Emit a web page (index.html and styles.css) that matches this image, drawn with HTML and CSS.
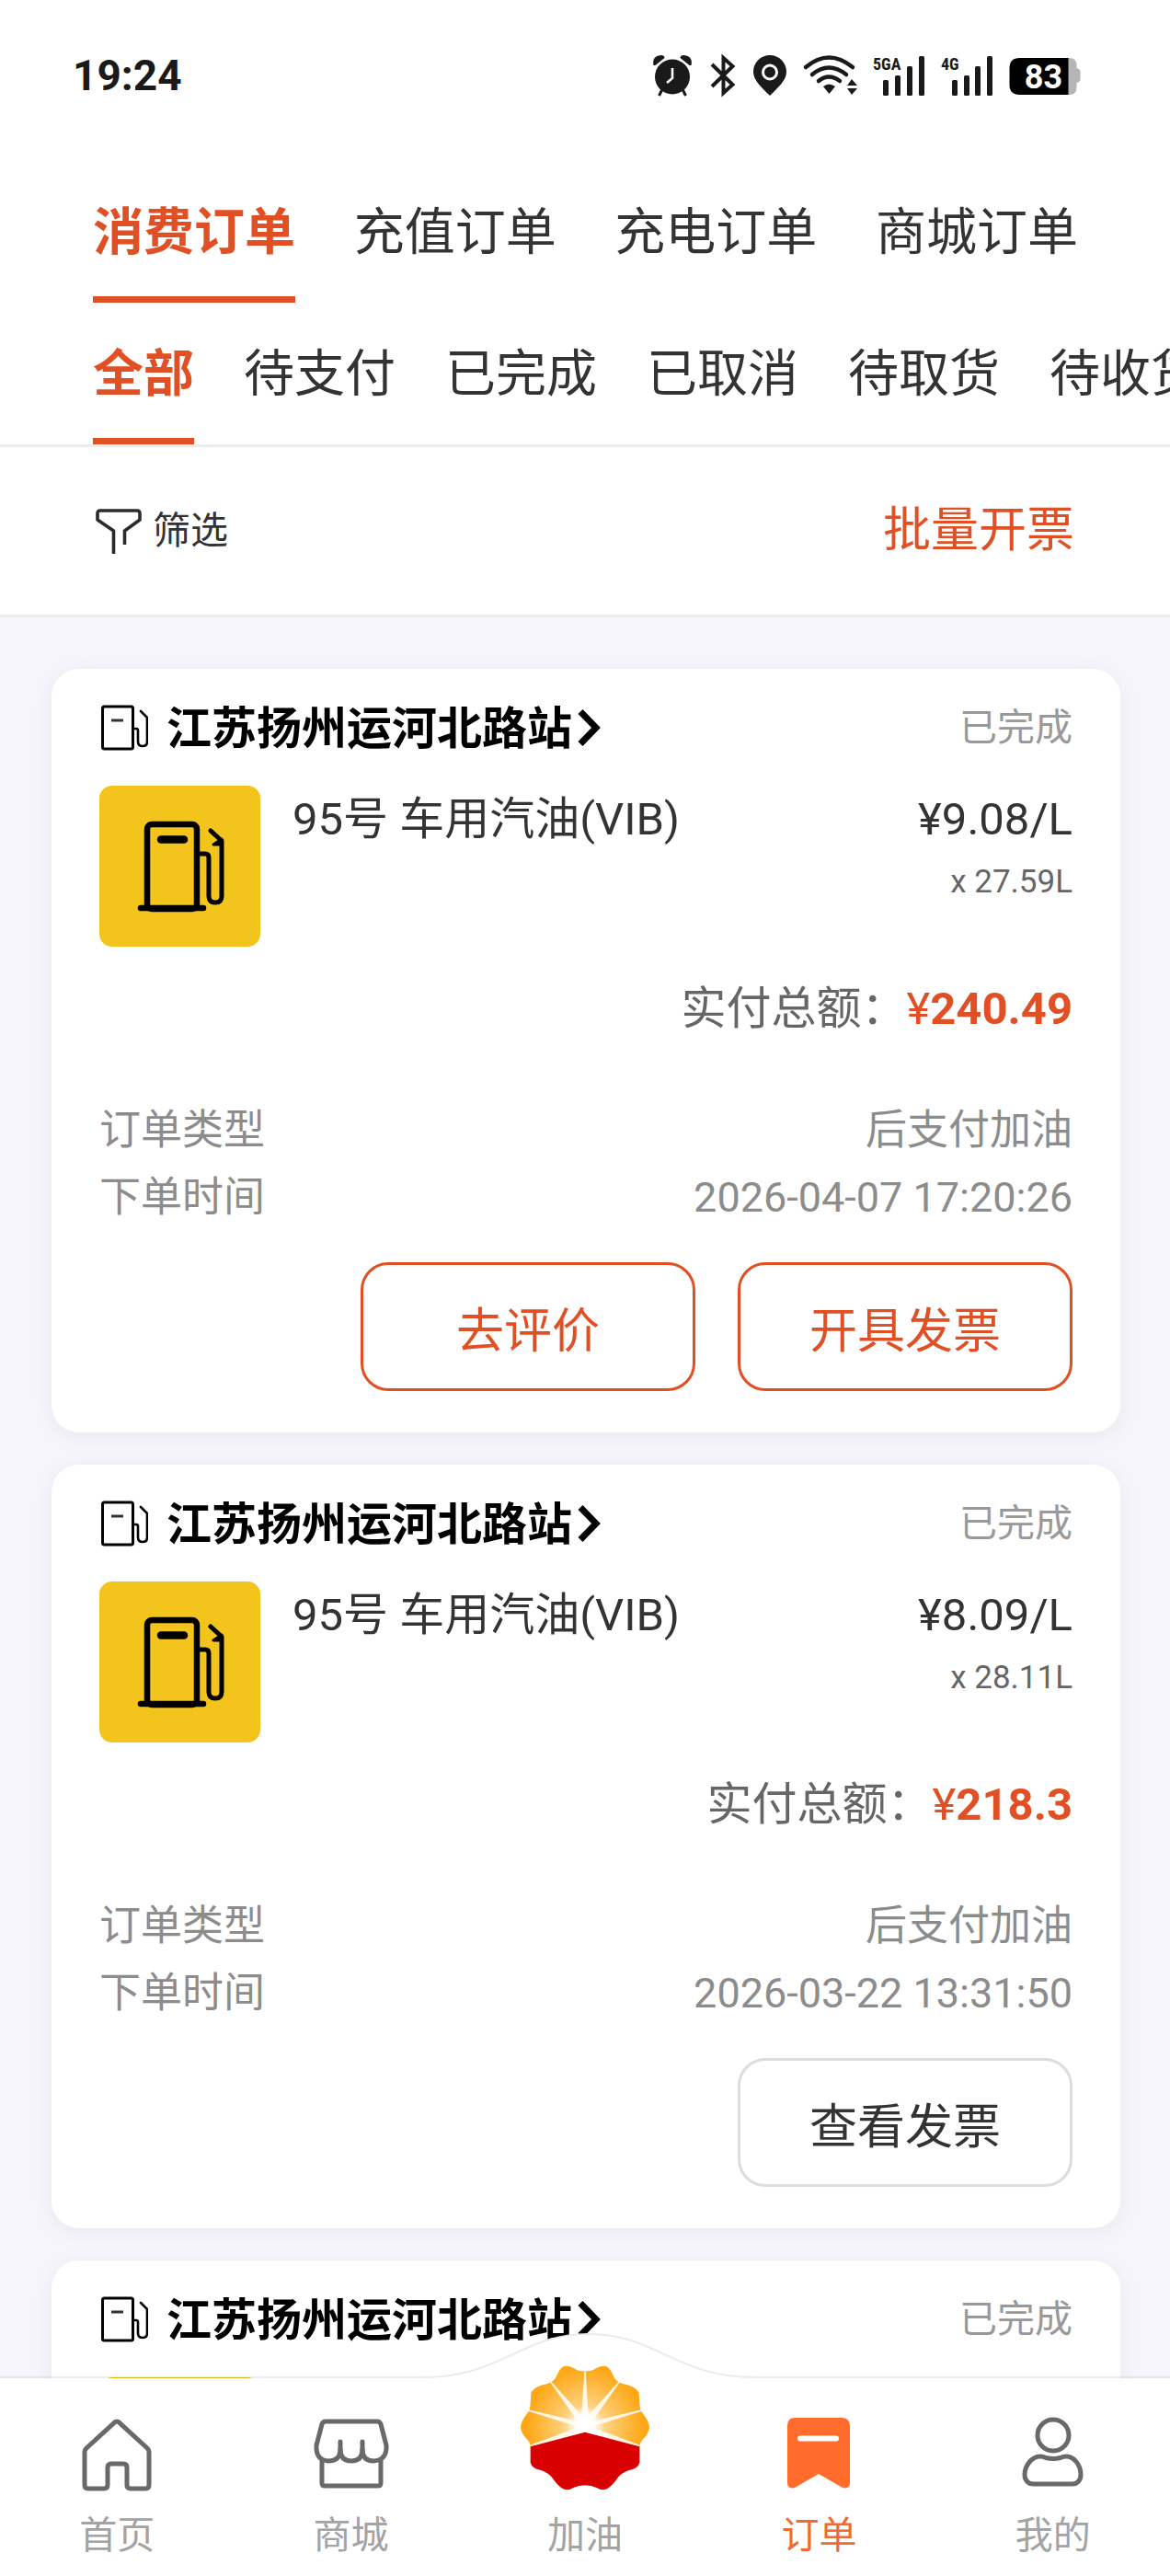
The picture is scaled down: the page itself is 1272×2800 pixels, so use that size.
FILE: index.html
```html
<!DOCTYPE html>
<html lang="zh-CN">
<head>
<meta charset="utf-8">
<meta name="viewport" content="width=device-width, initial-scale=1">
<title>订单</title>
<link rel="stylesheet" href="styles.css">
</head>
<body>
<svg class="sprite" aria-hidden="true">
  <symbol id="pump-small" viewBox="0 0 51 50">
    <g fill="none" stroke="#000" stroke-linejoin="round" stroke-linecap="round">
      <rect x="1.5" y="2" width="33" height="46" rx="2" stroke-width="3"/>
      <path d="M11 17h13" stroke="#333" stroke-width="3" stroke-linecap="butt"/>
      <path d="M35 26h3q2 0 2 2v12q0 5 5 5t5-5V14l-7-7" stroke-width="2.6"/>
    </g>
  </symbol>
  <symbol id="pump-large" viewBox="0 0 175 175">
    <g fill="none" stroke="#000" stroke-linejoin="round" stroke-linecap="round">
      <rect x="52" y="42" width="54" height="92" rx="5" stroke-width="6.5"/>
      <path d="M45 133h68" stroke-width="6.5"/>
      <path d="M67 58.500h25" stroke-width="8.500"/>
      <path d="M109 74h6q4 0 4 4v42q0 7 7 7t7-7V60l-12-11" stroke-width="5"/>
      <path d="M133 58l-9 6h9z" fill="#000" stroke-width="3"/>
    </g>
  </symbol>
  <symbol id="chevron" viewBox="0 0 26 42">
    <path d="M3 3.500L20 21 3 38.500" fill="none" stroke="#000" stroke-width="7"/>
  </symbol>
</svg>

<div class="app">
  <header class="top">
    <div class="status-bar">
      <time class="clock">19:24</time>
      <div class="status-icons">
        <svg width="46" height="44" viewBox="0 0 43 44" fill="#1a1a1a" aria-label="闹钟">
          <path d="M1 11Q-1 1 9 0q4 0 4 3L3 11zM42 11Q44 1 34 0q-4 0-4 3l10 8z"/>
          <path d="M10 38l-3 6M33 38l3 6" stroke="#1a1a1a" stroke-width="3"/>
          <circle cx="21.500" cy="23.500" r="19"/>
          <path d="M21.500 14v11l-6 5" fill="none" stroke="#fff" stroke-width="2.600"/>
        </svg>
        <svg width="30" height="44" viewBox="0 0 27 44" aria-label="蓝牙">
          <path d="M1.500 10L24 32 14 41V3l10 9L1.500 34" fill="none" stroke="#1a1a1a" stroke-width="4"/>
        </svg>
        <svg width="38" height="44" viewBox="0 0 36 44" aria-label="定位">
          <path d="M18 0C8 0 0 8 0 18c0 9 8 16 18 26 10-10 18-17 18-26C36 8 28 0 18 0z" fill="#1a1a1a"/>
          <circle cx="18" cy="18.500" r="7.500" fill="none" stroke="#fff" stroke-width="3"/>
        </svg>
        <svg width="59" height="44" viewBox="0 0 59 44" aria-label="无线网络">
          <g fill="none" stroke="#1a1a1a" stroke-width="4.500" stroke-linecap="round">
            <path d="M3 13Q28 -8 54 13M10 21Q28 6 47 21M17 28Q28 19 40 28"/>
          </g>
          <path d="M22 34q6-5 13 0l-6.500 8zM53 26l6 7H48zM48 36h11l-6 7z" fill="#1a1a1a"/>
        </svg>
        <svg width="57" height="44" viewBox="0 0 57 44" fill="#1a1a1a" aria-label="5GA 信号">
          <text class="net" x="0" y="16">5GA</text>
          <rect x="11" y="27" width="6" height="17" rx="1.500"/><rect x="24" y="22" width="6" height="22" rx="1.500"/>
          <rect x="37" y="12" width="6" height="32" rx="1.500"/><rect x="50" y="1" width="6" height="43" rx="1.500"/>
        </svg>
        <svg width="57" height="44" viewBox="0 0 57 44" fill="#1a1a1a" aria-label="4G 信号">
          <text class="net" x="0" y="16">4G</text>
          <rect x="12" y="27" width="6" height="17" rx="1.500"/><rect x="25" y="22" width="6" height="22" rx="1.500"/>
          <rect x="37" y="12" width="6" height="32" rx="1.500"/><rect x="50" y="1" width="6" height="43" rx="1.500"/>
        </svg>
        <svg width="78" height="44" viewBox="0 0 77 44" aria-label="电量 83%">
          <path d="M62 3h3q8 0 8 8v3q4 1 4 4v8q0 3-4 4v5q0 8-8 8h-3z" fill="#b5b5b5"/>
          <path d="M64 3H11Q0 3 0 14v18q0 11 11 11h53z" fill="#000"/>
          <text class="battery" x="37" y="36" text-anchor="middle">83</text>
        </svg>
      </div>
    </div>
    <nav class="tabs tabs-type" aria-label="订单种类">
      <button class="tab active">消费订单</button>
      <button class="tab">充值订单</button>
      <button class="tab">充电订单</button>
      <button class="tab">商城订单</button>
    </nav>
    <nav class="tabs tabs-state" aria-label="订单状态">
      <button class="tab active">全部</button>
      <button class="tab">待支付</button>
      <button class="tab">已完成</button>
      <button class="tab">已取消</button>
      <button class="tab">待取货</button>
      <button class="tab">待收货</button>
    </nav>
    <div class="toolbar">
      <button class="filter">
        <svg width="50" height="50" viewBox="0 0 50 50" aria-hidden="true">
          <path d="M19.500 49V24L2 12V5q0-3 3-3h40q3 0 3 3v7L31.500 24v15" fill="none" stroke="#2b2b2b" stroke-width="3.600" stroke-linejoin="round"/>
        </svg>
        筛选
      </button>
      <button class="batch">批量开票</button>
    </div>
  </header>

  <main class="orders">
    <article class="card">
      <div class="card-head">
        <a class="station" href="#station">
          <svg width="51" height="50" aria-hidden="true"><use href="#pump-small"/></svg>
          <span>江苏扬州运河北路站</span>
          <svg class="chevron" width="26" height="42" aria-hidden="true"><use href="#chevron"/></svg>
        </a>
        <span class="state">已完成</span>
      </div>
      <div class="product">
        <div class="thumb"><svg width="175" height="175" aria-hidden="true"><use href="#pump-large"/></svg></div>
        <h2 class="name">95号 车用汽油(VIB)</h2>
        <div class="price"><div class="unit">¥9.08/L</div><div class="amount">x 27.59L</div></div>
      </div>
      <p class="total">实付总额：<span class="money">¥<b>240.49</b></span></p>
      <dl class="details">
        <div class="detail"><dt>订单类型</dt><dd>后支付加油</dd></div>
        <div class="detail"><dt>下单时间</dt><dd>2026-04-07 17:20:26</dd></div>
      </dl>
      <div class="actions">
        <button class="action primary">去评价</button>
        <button class="action primary">开具发票</button>
      </div>
    </article>

    <article class="card">
      <div class="card-head">
        <a class="station" href="#station">
          <svg width="51" height="50" aria-hidden="true"><use href="#pump-small"/></svg>
          <span>江苏扬州运河北路站</span>
          <svg class="chevron" width="26" height="42" aria-hidden="true"><use href="#chevron"/></svg>
        </a>
        <span class="state">已完成</span>
      </div>
      <div class="product">
        <div class="thumb"><svg width="175" height="175" aria-hidden="true"><use href="#pump-large"/></svg></div>
        <h2 class="name">95号 车用汽油(VIB)</h2>
        <div class="price"><div class="unit">¥8.09/L</div><div class="amount">x 28.11L</div></div>
      </div>
      <p class="total">实付总额：<span class="money">¥<b>218.3</b></span></p>
      <dl class="details">
        <div class="detail"><dt>订单类型</dt><dd>后支付加油</dd></div>
        <div class="detail"><dt>下单时间</dt><dd>2026-03-22 13:31:50</dd></div>
      </dl>
      <div class="actions">
        <button class="action">查看发票</button>
      </div>
    </article>

    <article class="card">
      <div class="card-head">
        <a class="station" href="#station">
          <svg width="51" height="50" aria-hidden="true"><use href="#pump-small"/></svg>
          <span>江苏扬州运河北路站</span>
          <svg class="chevron" width="26" height="42" aria-hidden="true"><use href="#chevron"/></svg>
        </a>
        <span class="state">已完成</span>
      </div>
      <div class="product">
        <div class="thumb"><svg width="175" height="175" aria-hidden="true"><use href="#pump-large"/></svg></div>
      </div>
    </article>
  </main>

  <nav class="bottom-nav" aria-label="主导航">
    <svg class="bump" width="400" height="52" viewBox="0 0 400 52" aria-hidden="true">
      <path d="M24 49C110 49 130 2 204 2S298 49 384 49V52H24z" fill="#fff"/>
      <path d="M24 49C110 49 130 2 204 2S298 49 384 49" fill="none" stroke="#ebebed" stroke-width="2"/>
    </svg>
    <a class="nav-item" href="#home">
      <svg width="80" height="80" viewBox="0 0 80 80" aria-hidden="true">
        <path d="M40 4q2 0 3 1.500L73 33q2 2 2 4v36q0 4-4 4H55q-4 0-4-4V54q0-4-4-4H34q-4 0-4 4v19q0 4-4 4H9q-4 0-4-4V37q0-2 2-4L37 5.500Q38 4 40 4z" fill="none" stroke="#696969" stroke-width="5"/>
      </svg>
      <span>首页</span>
    </a>
    <a class="nav-item" href="#mall">
      <svg width="84" height="80" viewBox="0 0 84 80" aria-hidden="true">
        <g fill="none" stroke="#696969" stroke-width="5" stroke-linejoin="round" stroke-linecap="round">
          <path d="M10 46v25q0 3 3 3h58q3 0 3-3V46"/>
          <path d="M14 4h56q3 0 4 3l6 23q1 16-14 17-12 0-12-13 0 13-12 13T30 34q0 13-13 13Q3 46 4 30L10 7q1-3 4-3z"/>
          <path d="M30 26v9M54 26v9"/>
        </g>
      </svg>
      <span>商城</span>
    </a>
    <a class="nav-item" href="#fuel">
      <svg width="142" height="137" viewBox="315 263 426 411" aria-hidden="true">
        <defs>
          <radialGradient id="petal" gradientUnits="userSpaceOnUse" cx="528" cy="462" r="215">
            <stop offset="0.100" stop-color="#ffe9c0"/><stop offset="0.400" stop-color="#fdcb6e"/><stop offset="0.900" stop-color="#fda714"/>
          </radialGradient>
          <radialGradient id="glow" gradientUnits="userSpaceOnUse" cx="528" cy="458" r="62">
            <stop offset="0.350" stop-color="#fff"/><stop offset="1" stop-color="#fff" stop-opacity="0"/>
          </radialGradient>
          <g id="logo-half">
            <path d="M528 282Q505 283 490 271 470 262 455 268 445 275 437 294 430 313 415 319 400 325 385 328 357 337 352 354L350 390Q349 403 345 412 318 445 318 466 321 487 338 503 350 516 350 527L528 482z" fill="url(#petal)"/>
            <path d="M350 527V580Q355 600 385 605 413 615 425 635 440 656 455 665 472 674 490 662 508 654 529 654V480z" fill="#d80000"/>
            <path d="M526 282h3v190h-15zM414 317l3-2L538 450l-18 18zM344 413l2-5 181 43-9 16zM350 528l2-6 166-62 10 21z" fill="#fff" fill-opacity="0.850"/>
          </g>
        </defs>
        <use href="#logo-half"/>
        <use href="#logo-half" transform="translate(1056 0) scale(-1 1)"/>
        <path d="M350 527Q340 380 528 396 716 380 706 527L528 480z" fill="url(#glow)"/>
      </svg>
      <span>加油</span>
    </a>
    <a class="nav-item current" href="#orders">
      <svg width="80" height="80" viewBox="0 0 80 80" aria-hidden="true">
        <path d="M14 0h51q9 0 9 9v61q0 8-8 6L40 61 14 76q-8 2-8-6V9q0-9 8-9z" fill="#ff6c2c"/>
        <path d="M20 22.500h39" stroke="#fff" stroke-width="6" stroke-linecap="round"/>
      </svg>
      <span>订单</span>
    </a>
    <a class="nav-item" href="#me">
      <svg width="80" height="80" viewBox="0 0 80 80" aria-hidden="true">
        <g fill="none" stroke="#696969" stroke-width="5">
          <circle cx="40" cy="19" r="17"/>
          <path d="M26 42q3 0 6 1.500 8 2 16 0 3-1.500 6-1.500c10 0 16 11 16 20 0 6-4 10-9 10H18c-5 0-9-4-9-10 0-9 7-20 17-20z"/>
        </g>
      </svg>
      <span>我的</span>
    </a>
  </nav>
</div>
</body>
</html>
```
FILE: styles.css
```css
* { box-sizing: border-box; }

:root {
  --accent: #e05024;
  --ink: #333;
  --line: #ededf0;
}

body {
  margin: 0;
  font-family: Roboto, "Noto Sans CJK SC", sans-serif;
  line-height: 1.2;
  color: var(--ink);
  background: #f5f5fb;
}

button {
  margin: 0;
  padding: 0;
  border: 0;
  background: none;
  color: inherit;
  font: inherit;
  cursor: pointer;
}

a { color: inherit; text-decoration: none; }
svg { display: block; flex: none; overflow: visible; }
.sprite { position: absolute; width: 0; height: 0; }

.app {
  display: flex;
  flex-direction: column;
  height: 100vh;
}

.top { flex: none; background: #fff; }

/* Status bar */
.status-bar {
  display: flex;
  align-items: center;
  justify-content: space-between;
  height: 164px;
  padding: 0 97px 0 79px;
}
.clock { padding-top: 2px; font-size: 46px; font-weight: 700; color: #1a1a1a; }
.status-icons { display: flex; gap: 17px; }
.net { font: 700 18px "Roboto Condensed", Roboto, sans-serif; }
.battery { font: 700 36px Roboto, sans-serif; fill: #fff; }

/* Tabs */
.tabs { display: flex; padding: 0 100px 0 101px; }
.tabs-type { justify-content: space-between; }
.tabs-state { gap: 54px; overflow: hidden; border-bottom: 3px solid var(--line); }
.tab {
  flex: none;
  padding: 52px 0 34px;
  border-bottom: 7px solid transparent;
  font-size: 55px;
  line-height: 72px;
  white-space: nowrap;
}
.tabs-state .tab { padding-top: 41px; }
.tab.active { color: var(--accent); border-color: var(--accent); font-weight: 700; }

.toolbar {
  display: flex;
  align-items: center;
  justify-content: space-between;
  height: 185px;
  padding: 0 104px;
  border-bottom: 3px solid var(--line);
}
.filter { display: flex; align-items: center; gap: 12px; padding-top: 2px; font-size: 41px; }
.batch { font-size: 52px; color: var(--accent); }

/* Order list */
.orders {
  flex: 1;
  display: flex;
  flex-direction: column;
  gap: 35px;
  min-height: 0;
  padding: 56px 54px 56px 56px;
  overflow-y: auto;
  scrollbar-width: none;
}
.card {
  flex: none;
  padding: 28px 52px 45px;
  border-radius: 30px;
  background: #fff;
  box-shadow: 0 4px 24px rgba(0, 0, 0, 0.06);
}
.card-head {
  display: flex;
  align-items: center;
  justify-content: space-between;
  height: 72px;
  margin-bottom: 27px;
}
.station {
  display: flex;
  align-items: center;
  gap: 20px;
  padding-left: 2px;
  font-size: 49px;
  font-weight: 700;
  color: #000;
}
.station span { padding-top: 4px; }
.chevron { margin-left: -14px; }
.state { padding-top: 2px; font-size: 41px; color: #999; }

.product { display: flex; gap: 35px; height: 175px; }
.thumb { flex: none; width: 175px; height: 175px; border-radius: 14px; background: #f3c41c; }
.name { flex: 1; margin: 0; font-size: 49px; font-weight: 400; line-height: 74px; }
.price { text-align: right; }
.unit { font-size: 49px; line-height: 74px; }
.amount { font-size: 35px; line-height: 62px; color: #666; }

.total {
  margin: 32px 0 59px;
  font-size: 49px;
  line-height: 72px;
  text-align: right;
  color: #666;
}
.money { color: var(--accent); }

.details { margin: 0 0 34px; font-size: 45px; line-height: 73px; color: #8c8c8c; }
.detail { display: flex; justify-content: space-between; }
.detail dt, .detail dd { margin: 0; }

.actions { display: flex; justify-content: flex-end; gap: 46px; }
.action {
  width: 364px;
  height: 140px;
  border: 3px solid #ddd;
  border-radius: 30px;
  font-size: 52px;
  line-height: normal;
}
.action.primary { border-color: var(--accent); color: var(--accent); }

/* Bottom navigation */
.bottom-nav {
  position: relative;
  flex: none;
  display: grid;
  grid-template-columns: repeat(5, 1fr);
  grid-template-rows: 100%;
  height: 217px;
  margin-top: -2px;
  border-top: 2px solid rgba(0, 0, 0, 0.07);
  background: #fff;
  background-clip: padding-box;
}
.bump {
  position: absolute;
  left: 50%;
  bottom: 100%;
  margin: 0 0 -2px -200px;
}
.nav-item {
  position: relative;
  display: flex;
  flex-direction: column;
  align-items: center;
  justify-content: flex-end;
  gap: 18px;
  min-height: 0;
  padding-bottom: 14px;
  font-size: 41px;
  line-height: 60px;
  color: #a3a3a3;
}
.nav-item.current { color: #ee6b35; }
```
